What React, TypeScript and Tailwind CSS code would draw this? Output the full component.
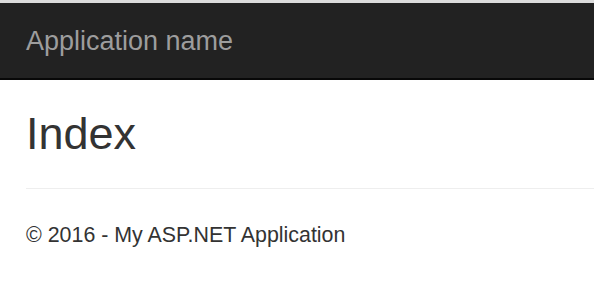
export default function App() {
  return (
    <div className="min-h-[297px] w-full bg-white font-['Liberation_Sans',Arial,sans-serif] text-[#333]">
      <div className="h-[3px] bg-[#dcdcdc]" />
      <nav className="flex h-[77px] items-center border-b-2 border-[#080808] bg-[#222] px-[26px]">
        <span className="pt-[2px] text-[27px] leading-none text-[#9d9d9d]">Application name</span>
      </nav>
      <div className="pl-[26px]">
        <h2 className="mt-[29px] mb-[29px] text-[45px] leading-[50px] font-normal text-[#333]">Index</h2>
        <div className="h-px bg-[#eee]" />
        <footer>
          <p className="mt-[31px] text-[21.4px] leading-[30px] text-[#333]">© 2016 - My ASP.NET Application</p>
        </footer>
      </div>
    </div>
  );
}
